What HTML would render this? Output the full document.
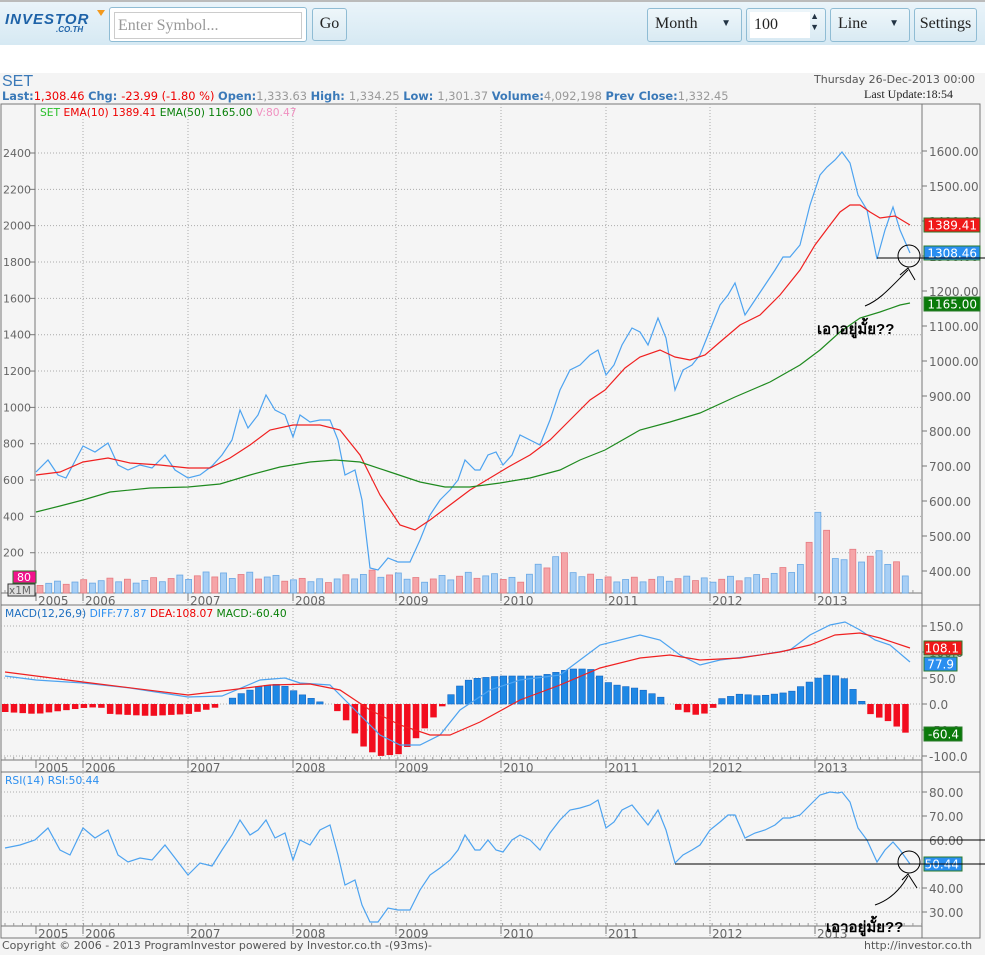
<!DOCTYPE html>
<html><head><meta charset="utf-8">
<style>
body{margin:0;width:985px;height:955px;overflow:hidden;background:#fff;font-family:"Liberation Sans",sans-serif;position:relative}
.top{position:absolute;left:0;top:0;width:985px;height:45px;background:linear-gradient(#eaf4fa,#d6e9f3);border-top:2px solid #bbb;box-sizing:border-box}
.box{position:absolute;border:1px solid #8fbcd4;border-radius:3px;background:linear-gradient(#eef6fa,#d9eaf3);font-family:"Liberation Serif",serif;font-size:16px;color:#222;box-sizing:border-box;line-height:30px}
.gray{position:absolute;left:0;top:73px;width:985px;height:882px;background:#f4f4f4}
.hd{position:absolute;font-family:"DejaVu Sans",sans-serif;font-size:11px;white-space:nowrap}
</style></head><body>
<div class="top">
<div style="position:absolute;left:5px;top:9px;font:italic 900 15px 'Liberation Sans',sans-serif;color:#1e63a8;letter-spacing:1px">INVESTOR</div>
<div style="position:absolute;left:56px;top:23px;font:italic 900 8px 'Liberation Sans',sans-serif;color:#1e63a8">.CO.TH</div>
<div style="position:absolute;left:97px;top:8px;width:0;height:0;border-left:4px solid transparent;border-right:4px solid transparent;border-top:6px solid #f39a1e"></div>
<div class="box" style="left:109px;top:5px;width:198px;height:35px;background:#fff;padding:4px"><div style="border:1px solid #ccc;height:25px;line-height:25px;color:#999;padding-left:3px">Enter Symbol...</div></div>
<div class="box" style="left:312px;top:6px;width:35px;height:33px;text-align:center">Go</div>
<div class="box" style="left:647px;top:6px;width:95px;height:34px;padding-left:7px">Month<span style="position:absolute;right:10px;font-size:10px;color:#234">▼</span></div>
<div class="box" style="left:746px;top:6px;width:80px;height:34px;padding:3px"><div style="background:#fff;width:56px;height:26px;line-height:26px;padding-left:4px">100</div><span style="position:absolute;right:6px;top:2px;font-size:9px;line-height:11px;color:#234">▲<br>▼</span></div>
<div class="box" style="left:830px;top:6px;width:80px;height:34px;padding-left:7px">Line<span style="position:absolute;right:10px;font-size:10px;color:#234">▼</span></div>
<div class="box" style="left:914px;top:6px;width:63px;height:34px;text-align:center">Settings</div>
</div>
<div class="gray"></div>
<div class="hd" style="left:2px;top:73px;font-size:16px;color:#3a79b8;font-family:'Liberation Sans',sans-serif">SET</div>
<div class="hd" style="left:2px;top:89px;font-size:11.4px"><b style="color:#3a79b8">Last:</b><span style="color:#e00">1,308.46 </span><b style="color:#3a79b8">Chg: </b><span style="color:#e00">-23.99 (-1.80 %) </span> <b style="color:#3a79b8">Open:</b><span style="color:#999">1,333.63 </span><b style="color:#3a79b8">High: </b><span style="color:#999">1,334.25 </span><b style="color:#3a79b8">Low: </b><span style="color:#999">1,301.37 </span><b style="color:#3a79b8">Volume:</b><span style="color:#999">4,092,198 </span> <b style="color:#3a79b8">Prev Close:</b><span style="color:#999">1,332.45</span></div>
<div class="hd" style="left:814px;top:73px;color:#555">Thursday 26-Dec-2013 00:00</div>
<div class="hd" style="left:864px;top:87px;color:#222;font-family:'Liberation Serif',serif;font-size:12px">Last Update:18:54</div>
<svg id="s" style="position:absolute;left:0;top:0" width="985" height="955" font-family="DejaVu Sans, sans-serif" font-size="11"></svg>
<div class="hd" style="left:2px;top:939px;color:#555;font-size:11px">Copyright © 2006 - 2013 ProgramInvestor powered by Investor.co.th -(93ms)-</div>
<div class="hd" style="left:864px;top:939px;color:#555">http://investor.co.th</div>
<script>
var S='';function a(x){S+=x}
function pl(p,c,w){a('<polyline fill="none" stroke="'+c+'" stroke-width="'+(w||1.2)+'" points="'+p.map(function(q){return q.join(',')}).join(' ')+'"/>')}
function interp(k,x){for(var i=1;i<k.length;i++){if(x<=k[i][0]){var t=(x-k[i-1][0])/(k[i][0]-k[i-1][0]);return k[i-1][1]+t*(k[i][1]-k[i-1][1])}}return k[k.length-1][1]}
a('<rect x="1" y="104" width="921" height="501" fill="#f5f5f5" stroke="#777"/>');
a('<rect x="1" y="605" width="921" height="167" fill="#f5f5f5" stroke="#777"/>');
a('<rect x="1" y="772" width="921" height="166" fill="#f5f5f5" stroke="#777"/>');
a('<rect x="922" y="104" width="58" height="834" fill="#f5f5f5" stroke="#777"/>');
a('<line x1="922" y1="605" x2="980" y2="605" stroke="#777"/><line x1="922" y1="772" x2="980" y2="772" stroke="#777"/>');
a('<line x1="35" y1="104" x2="35" y2="593" stroke="#777"/>');
var yrs=[[36,'2005'],[83,'2006'],[188,'2007'],[293,'2008'],[396,'2009'],[501,'2010'],[606,'2011'],[710,'2012'],[815,'2013']];
var G='stroke="#aaa" stroke-dasharray="1,2"';
yrs.forEach(function(y,i){if(i>0){a('<line x1="'+y[0]+'" y1="104" x2="'+y[0]+'" y2="938" '+G+'/>')}});
var L=[2400,2200,2000,1800,1600,1400,1200,1000,800,600,400,200];
L.forEach(function(v){var y=153+(2400-v)*0.1817;a('<line x1="35" y1="'+y+'" x2="922" y2="'+y+'" '+G+'/><line x1="30" y1="'+y+'" x2="35" y2="'+y+'" stroke="#777"/><text x="3" y="'+(y+4)+'" fill="#666">'+v+'</text>')});
for(var v=1600;v>=400;v-=100){var y=151+(1600-v)*0.35;a('<line x1="922" y1="'+y+'" x2="927" y2="'+y+'" stroke="#777"/><text x="929" y="'+(y+5)+'" fill="#666" font-size="12">'+v+'.00</text>')}
[150,100,50,0,-50,-100].forEach(function(v){var y=704-v*0.52;a('<line x1="1" y1="'+y+'" x2="922" y2="'+y+'" '+G+'/><line x1="922" y1="'+y+'" x2="927" y2="'+y+'" stroke="#777"/><text x="929" y="'+(y+5)+'" fill="#666" font-size="12">'+v+'.0</text>')});
[80,70,60,50,40,30].forEach(function(v){var y=792+(80-v)*2.4;a('<line x1="1" y1="'+y+'" x2="922" y2="'+y+'" '+G+'/><line x1="922" y1="'+y+'" x2="927" y2="'+y+'" stroke="#777"/><text x="929" y="'+(y+5)+'" fill="#666" font-size="12">'+v+'.00</text>')});
[593,760,926].forEach(function(b){a('<line x1="1" y1="'+b+'" x2="922" y2="'+b+'" stroke="#777"/>');for(var x=5;x<922;x+=8.73)a('<line x1="'+x+'" y1="'+(b-3)+'" x2="'+x+'" y2="'+b+'" stroke="#999"/>');yrs.forEach(function(y){a('<line x1="'+y[0]+'" y1="'+b+'" x2="'+y[0]+'" y2="'+(b+8)+'" stroke="#777"/><text x="'+(y[0]+2)+'" y="'+(b+12)+'" fill="#666" font-size="12">'+y[1]+'</text>')})});
var vk=[[36,10],[100,12],[160,14],[240,20],[300,12],[330,14],[370,20],[420,14],[470,18],[520,14],[560,40],[580,16],[640,14],[700,14],[760,16],[800,25],[815,95],[823,55],[830,70],[838,30],[850,38],[880,35],[900,28],[910,18]];
for(var i=0;i<100;i++){var x=40+i*8.74,h=interp(vk,x)*(0.75+0.5*((i*37)%11)/11);if(x>812&&x<835)h=interp(vk,x);var blue=((i*7+3)%5)<3;a('<rect x="'+(x-3)+'" y="'+(593-h)+'" width="6" height="'+h+'" fill="'+(blue?'#a8cff5':'#f5a5a8')+'" stroke="'+(blue?'#6aa8e4':'#e67b82')+'" stroke-width="0.8"/>')}
pl([[36,472],[48,460],[58,475],[66,478],[83,446],[95,452],[108,443],[118,465],[128,470],[140,465],[152,468],[165,455],[175,470],[188,478],[200,475],[212,466],[222,455],[232,440],[240,410],[248,428],[258,415],[266,395],[275,410],[285,415],[293,437],[300,415],[310,422],[320,420],[330,420],[338,440],[345,475],[355,470],[362,500],[370,568],[378,570],[388,558],[398,562],[410,562],[420,540],[430,515],[440,500],[450,490],[458,480],[465,460],[475,470],[480,470],[488,455],[496,452],[503,465],[512,455],[520,435],[530,440],[540,445],[550,420],[560,390],[570,370],[580,365],[590,355],[598,350],[606,375],[614,365],[622,345],[632,328],[640,332],[648,345],[658,318],[666,338],[675,390],[683,370],[692,365],[700,355],[710,330],[720,305],[728,295],[735,283],[745,315],[755,300],[765,285],[775,270],[783,257],[790,257],[800,245],[810,205],[820,175],[827,167],[835,160],[842,152],[850,163],[858,195],[867,210],[877,259],[885,230],[893,207],[900,230],[910,253]],'#4da3f0');
pl([[36,475],[60,472],[83,462],[108,458],[130,463],[160,465],[188,468],[210,468],[230,458],[250,445],[270,430],[293,425],[320,425],[340,430],[360,455],[380,495],[400,525],[415,530],[430,520],[450,505],[470,490],[490,478],[510,466],[530,455],[550,440],[570,420],[590,400],[605,390],[625,368],[640,357],[660,350],[675,357],[690,360],[705,355],[720,342],[740,325],[760,315],[780,295],[800,270],[815,245],[830,225],[840,212],[850,205],[860,205],[870,212],[880,218],[895,216],[910,225]],'#f02020');
pl([[36,512],[60,506],[83,500],[110,492],[150,488],[188,487],[220,484],[250,475],[280,467],[310,462],[335,460],[360,462],[390,472],[420,482],[445,487],[470,487],[500,483],[530,478],[560,470],[580,460],[605,450],[640,430],[670,422],[700,413],[735,397],[770,382],[800,365],[820,350],[840,332],[860,318],[880,312],[900,305],[910,303]],'#1f8a1f');
var hk=[[5,-8],[36,-10],[83,-4],[100,-3],[110,-10],[150,-12],[188,-10],[222,-2],[235,8],[260,18],[280,20],[300,10],[320,2],[330,0],[345,-15],[365,-45],[380,-52],[400,-50],[420,-30],[440,-5],[455,15],[470,25],[500,28],[540,28],[570,35],[590,35],[610,20],[640,15],[665,5],[675,-5],[700,-12],[712,-5],[720,5],[740,10],[760,8],[790,12],[815,25],[830,30],[845,25],[860,5],[870,-10],[890,-18],[910,-32]];
for(var i=0;i<104;i++){var x=5+i*8.74,h=interp(hk,x);if(Math.abs(h)<1.5)continue;a('<rect x="'+(x-3)+'" y="'+(h>0?704-h:704)+'" width="6.5" height="'+Math.abs(h)+'" fill="'+(h>0?'#1e88e5':'#f20d1e')+'" stroke="'+(h>0?'#1565c0':'none')+'" stroke-width="0.6"/>')}
pl([[5,676],[36,680],[83,683],[130,688],[188,697],[222,696],[260,680],[285,678],[300,683],[330,685],[355,710],[380,735],[400,745],[420,745],[440,735],[460,710],[490,690],[520,680],[560,675],[580,660],[600,645],[640,635],[660,640],[680,655],[700,665],[720,660],[760,655],[790,650],[810,635],[830,625],[845,622],[860,630],[875,640],[890,645],[910,662]],'#4da3f0');
pl([[5,672],[83,682],[188,695],[230,690],[270,685],[310,684],[340,690],[370,710],[400,725],[430,735],[450,735],[480,722],[520,700],[560,685],[600,668],[640,658],[670,655],[700,660],[740,658],[780,652],[810,645],[835,635],[860,633],[880,638],[910,648]],'#f02020');
pl([[5,848],[20,845],[35,840],[48,828],[60,850],[70,855],[83,828],[95,838],[108,830],[118,855],[128,862],[140,858],[152,860],[165,845],[175,858],[188,875],[200,863],[212,866],[222,850],[232,835],[240,820],[250,835],[258,830],[266,820],[275,838],[285,833],[293,860],[300,840],[310,845],[320,830],[330,825],[338,855],[345,885],[355,880],[362,905],[370,922],[378,922],[388,908],[398,910],[410,910],[420,890],[430,875],[440,868],[450,860],[458,850],[465,835],[475,850],[480,850],[488,840],[496,850],[503,852],[512,840],[520,835],[530,840],[540,850],[550,833],[560,820],[570,810],[580,808],[590,805],[598,800],[606,828],[614,822],[622,810],[632,805],[640,815],[648,825],[658,810],[666,830],[675,863],[683,855],[692,850],[700,845],[710,830],[720,822],[728,815],[735,815],[745,838],[755,833],[765,830],[775,825],[783,818],[790,818],[800,815],[810,805],[820,795],[830,792],[838,793],[842,792],[850,802],[858,828],[867,840],[877,862],[885,850],[893,842],[900,850],[910,864]],'#4da3f0');
a('<text x="40" y="116" font-size="10.7"><tspan fill="#2cc02c">SET </tspan><tspan fill="#e00">EMA(10) 1389.41 </tspan><tspan fill="#0a800a">EMA(50) 1165.00 </tspan><tspan fill="#f090c0">V:80.47</tspan></text>');
a('<text x="5" y="617" font-size="10.7"><tspan fill="#1e6fc0">MACD(12,26,9) </tspan><tspan fill="#2a8ef0">DIFF:77.87 </tspan><tspan fill="#e00">DEA:108.07 </tspan><tspan fill="#0a800a">MACD:-60.40</tspan></text>');
a('<text x="5" y="784" font-size="10.7" fill="#2a8ef0">RSI(14) RSI:50.44</text>');
function bd(x,y,w,bg,t,bc){a('<rect x="'+x+'" y="'+y+'" width="'+w+'" height="14" fill="'+bg+'" stroke="'+(bc||'#2a7a2a')+'"/><text x="'+(x+w-3)+'" y="'+(y+11.5)+'" fill="#fff" font-size="12" text-anchor="end">'+t+'</text>')}
bd(924,218,56,'#f01818','1389.41');bd(924,246,56,'#2a8ef0','1308.46');bd(924,297,56,'#0a7a0a','1165.00');
bd(924,641,38,'#f01818','108.1');bd(924,657,33,'#2a8ef0','77.9');bd(924,727,38,'#0a7a0a','-60.4');bd(924,857,38,'#2a8ef0','50.44');
a('<rect x="13" y="571" width="23" height="12" fill="#f0148c" stroke="#2a7a2a"/><text x="17" y="581" fill="#fff" font-size="11">80</text><rect x="8" y="584" width="27" height="12" fill="#ddd" stroke="#333"/><text x="9" y="594" fill="#666" font-size="10.5">x1M</text>');
a('<line x1="877" y1="258" x2="985" y2="258" stroke="#000"/><ellipse cx="909" cy="256" rx="11" ry="11" fill="none" stroke="#000"/><path d="M865,306 C880,300 890,288 908,270 M900,275 L908,268 L915,280" fill="none" stroke="#000"/>');
a('<text x="817" y="334" font-size="15" font-weight="bold" fill="#000" font-family="Liberation Sans, Noto Sans CJK SC, sans-serif">เอาอยู่มั้ย??</text>');
a('<line x1="746" y1="840" x2="985" y2="840" stroke="#000"/><line x1="675" y1="864" x2="985" y2="864" stroke="#000"/><ellipse cx="909" cy="862" rx="11" ry="11" fill="none" stroke="#000"/><path d="M875,905 C890,900 900,890 908,876 M902,880 L908,874 L917,888" fill="none" stroke="#000"/>');
a('<text x="826" y="932" font-size="15" font-weight="bold" fill="#000" font-family="Liberation Sans, Noto Sans CJK SC, sans-serif">เอาอยู่มั้ย??</text>');
document.getElementById('s').innerHTML=S;
</script>
</body></html>
